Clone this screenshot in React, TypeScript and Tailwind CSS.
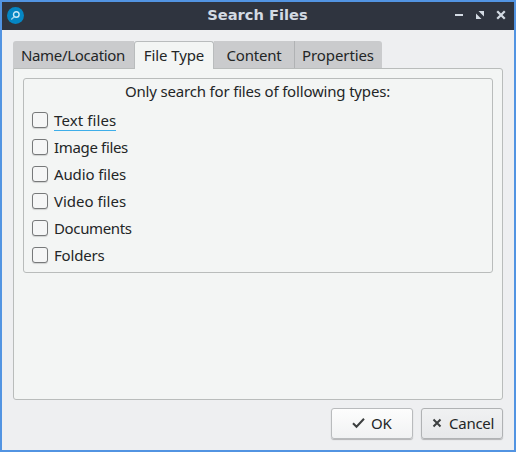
import React from "react";

const fileTypes = [
  { label: "Text files", tracking: "tracking-[0.1px]", focused: true },
  { label: "Image files", tracking: "tracking-[-0.34px]" },
  { label: "Audio files", tracking: "tracking-[-0.12px]" },
  { label: "Video files", tracking: "tracking-[0px]" },
  { label: "Documents", tracking: "tracking-[-0.36px]" },
  { label: "Folders", tracking: "tracking-[-0.2px]" },
];

function TitleBar() {
  return (
    <header className="grid h-7 shrink-0 grid-cols-[70px_1fr_70px] items-center bg-[#2f343f] text-[#d3dae3]">
      <svg className="ml-[5px] -mt-0.5" width="17" height="17" viewBox="0 0 17 17">
        <circle cx="8.5" cy="8.5" r="8.5" fill="#0586c4" />
        <circle cx="9.3" cy="7.5" r="2.8" fill="none" stroke="#cce9f5" strokeWidth="1.4" />
        <path d="M7.2 9.7 4.2 12.5" stroke="#9bd2ed" strokeWidth="1.4" />
      </svg>
      <h1 className="pb-0.5 pr-px text-center font-['DejaVu_Sans',sans-serif] text-[14.67px] leading-[26px] font-bold whitespace-nowrap">
        Search Files
      </h1>
      <svg className="-mt-0.5 justify-self-end" width="61" height="16" viewBox="453 7 61 16" fill="#d3dae3">
        <path d="M455 14h8v2h-8z" />
        <path d="M478.5 11h5.5v5.5zM476 13.5l5.5 5.5H476z" />
        <path d="m498 12 6 6m0-6-6 6" stroke="#d3dae3" strokeWidth="2.2" strokeLinecap="square" />
      </svg>
    </header>
  );
}

function Tabs() {
  return (
    <nav className="relative z-10 -mb-px flex h-7 text-[#232627]">
      <button className="h-[27px] w-[121px] rounded-tl-[3px] bg-[#cacbcd] pr-px">
        <span className="tracking-[-0.3px]">Name/Location</span>
      </button>
      <button className="h-[28px] w-20 rounded-t-[3px] border border-b-0 border-[#b9bcbd] bg-[#f3f5f4] pb-px">
        <span className="tracking-[-0.1px]">File Type</span>
      </button>
      <button className="h-[27px] w-20 bg-[#cacbcd]">
        <span className="tracking-[-0.2px]">Content</span>
      </button>
      <button className="h-[27px] w-[88px] rounded-tr-[3px] border-l border-[#b0b2b4] bg-[#cacbcd] pr-px">
        <span className="tracking-[-0.1px]">Properties</span>
      </button>
    </nav>
  );
}

export default function App() {
  return (
    <div className="flex h-[452px] w-[516px] flex-col overflow-hidden border-2 border-[#5294e2] bg-[#eeeff1] font-['Noto_Sans',sans-serif] text-[15px] leading-5 text-[#232627]">
      <TitleBar />
      <main className="flex flex-1 flex-col px-[11px] pt-[11px] whitespace-nowrap">
        <Tabs />
        <section className="h-[332px] shrink-0 rounded-[3px] rounded-tl-none border border-[#b9bcbb] bg-[#f3f5f4] p-[9px]">
          <fieldset className="h-[195px] rounded-[3px] border border-[#b9bcbb] px-2 pt-0.5">
            <p className="pr-px text-center"><span className="tracking-[-0.18px]">Only search for files of following types:</span></p>
            <div className="mt-[6px]">
              {fileTypes.map((type) => (
                <label key={type.label} className="flex h-[27px] items-center">
                  <span className="mr-1.5 mb-0.5 size-4 rounded-[3px] border border-[#77797a] bg-[#f5f6f6] shadow-[0_1px_1px_#00000026]" />
                  <span className={"h-[21px] border-b " + type.tracking + (type.focused ? " border-[#3daee9]" : " border-transparent")}>
                    {type.label}
                  </span>
                </label>
              ))}
            </div>
          </fieldset>
        </section>
        <footer className="mt-2 flex justify-end gap-2">
          <button className="flex h-[31px] w-[82px] items-center rounded-[3px] border border-[#b9bbbd] bg-linear-to-b from-[#fdfdfd] to-[#f1f2f3] pl-5 shadow-[0_1px_1px_#00000040]">
            <svg className="mr-1.5 mb-0.5" width="13" height="12" viewBox="0 0 13 12">
              <path d="m1 6.2 3.5 3.6L12 1.7" fill="none" stroke="#3c3f40" strokeWidth="2" />
            </svg>
            <span className="pb-0.5 tracking-[-0.1px]">OK</span>
          </button>
          <button className="flex h-[31px] w-[82px] items-center rounded-[3px] border border-[#b0b2b4] bg-linear-to-b from-[#f0f1f2] to-[#e7e8ea] pl-[10px] shadow-[0_1px_1px_#00000040]">
            <svg className="mr-[7px] mb-0.5" width="10" height="10" viewBox="0 0 10 10">
              <path d="m1.5 1.5 7 7m0-7-7 7" stroke="#3c3f40" strokeWidth="2" />
            </svg>
            <span className="pb-0.5 tracking-[-0.25px]">Cancel</span>
          </button>
        </footer>
      </main>
    </div>
  );
}
